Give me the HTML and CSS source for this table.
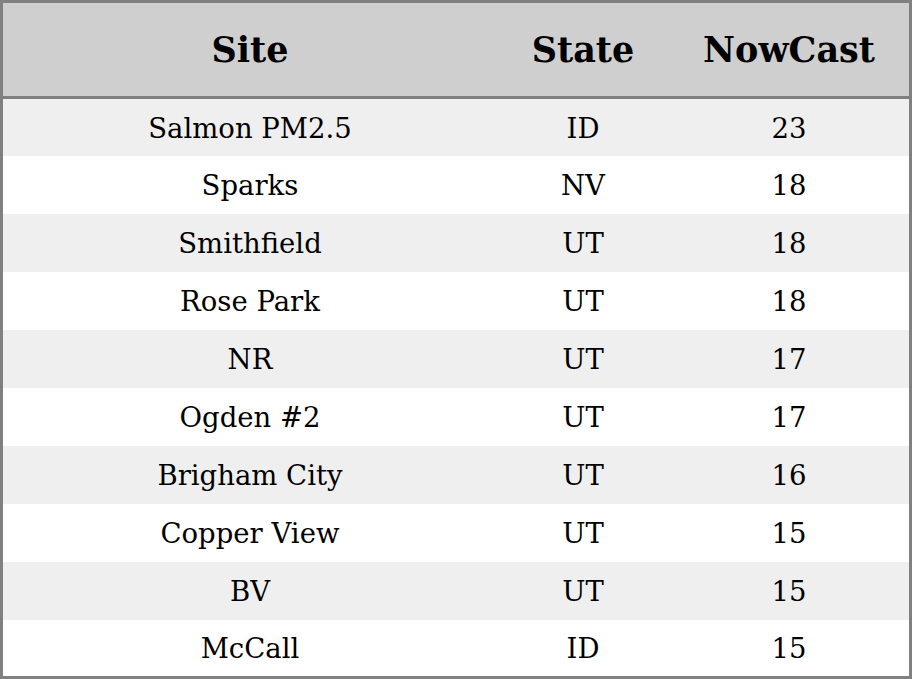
FILE: index.html
```html
<!DOCTYPE html>
<html>
<head>
<meta charset="utf-8">
<link rel="stylesheet" href="styles.css">
</head>
<body>
<table class="aq">
  <thead>
    <tr><th class="c-site">Site</th><th class="c-state">State</th><th class="c-now">NowCast</th></tr>
  </thead>
  <tbody>
    <tr><td>Salmon PM2.5</td><td>ID</td><td>23</td></tr>
    <tr><td>Sparks</td><td>NV</td><td>18</td></tr>
    <tr><td>Smithfield</td><td>UT</td><td>18</td></tr>
    <tr><td>Rose Park</td><td>UT</td><td>18</td></tr>
    <tr><td>NR</td><td>UT</td><td>17</td></tr>
    <tr><td>Ogden #2</td><td>UT</td><td>17</td></tr>
    <tr><td>Brigham City</td><td>UT</td><td>16</td></tr>
    <tr><td>Copper View</td><td>UT</td><td>15</td></tr>
    <tr><td>BV</td><td>UT</td><td>15</td></tr>
    <tr><td>McCall</td><td>ID</td><td>15</td></tr>
  </tbody>
</table>
</body>
</html>
```
FILE: styles.css
```css
html, body {
  margin: 0;
  padding: 0;
  background: #ffffff;
}
.aq {
  width: 912px;
  height: 679px;
  border-collapse: collapse;
  border: 3px solid #808080;
  font-family: "DejaVu Serif", serif;
  color: #000;
  table-layout: fixed;
}
.aq th {
  background: #cfcfcf;
  font-size: 35px;
  font-weight: bold;
  height: 93px;
  border-bottom: 3px solid #808080;
  padding: 0;
  text-align: center;
}
.c-site { width: 494px; }
.c-state { width: 172px; }
.aq td {
  font-size: 27.5px;
  line-height: 32px;
  text-align: center;
  padding: 1px 0 0 0;
  height: 56.7px;
  box-sizing: border-box;
}
.aq tbody tr:nth-child(odd) td { background: #efefef; }
.aq tbody tr:nth-child(even) td { background: #ffffff; }
```
